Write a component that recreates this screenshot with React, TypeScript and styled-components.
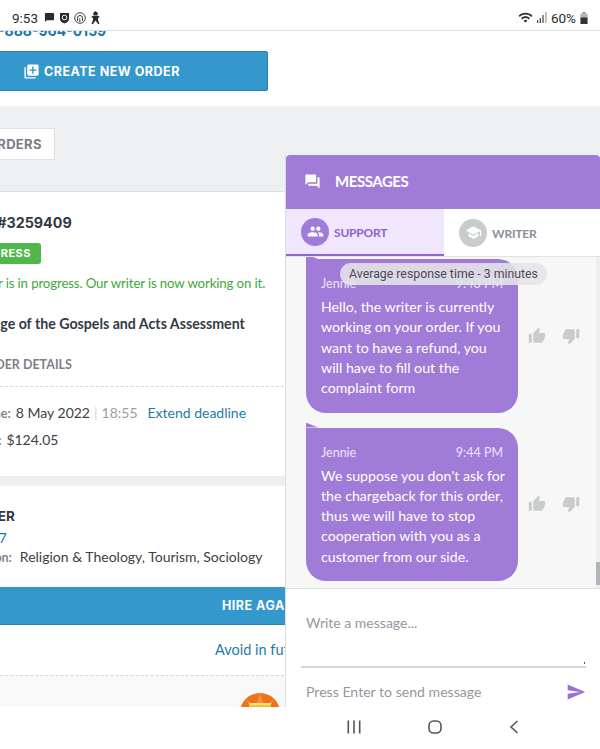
import React from 'react';
import styled, { createGlobalStyle } from 'styled-components';
import { MdChatBubble, MdLibraryAdd, MdPeople, MdQuestionAnswer, MdSchool, MdSend, MdThumbDown, MdThumbUp, MdWifi } from 'react-icons/md';

const GlobalStyle = createGlobalStyle`
    html, body {
        margin: 0;
        padding: 0;
        background: #fff;
        font-family: 'Lato', 'Liberation Sans', sans-serif;
    }
    * { box-sizing: border-box; }
`;

const Page = styled.div`
    width: 600px;
    height: 749px;
    display: flex;
    flex-direction: column;
    overflow: hidden;
    background: #fff;
`;

const StatusBar = styled.header`
    flex: 0 0 31px;
    padding: 5px 12px 0 12px;
    display: flex;
    align-items: center;
    justify-content: space-between;
    background: #fff;
    border-bottom: 1px solid #dfdfdf;
    font-family: 'Roboto', sans-serif;
    font-size: 13.5px;
    color: #2b2b2b;
    position: relative;
    z-index: 2;
`;

const StatusGroup = styled.div`
    display: flex;
    align-items: center;
    gap: 4px;
`;

const StatusTime = styled.span`
    margin-right: 2px;
`;

const Body = styled.div`
    flex: 1;
    position: relative;
    overflow: hidden;
`;

const Main = styled.main`
    width: 100%;
    height: 100%;
    overflow: hidden;
`;

const Inner = styled.div`
    width: 660px;
    margin-left: -60px;
`;

const TopBlock = styled.section`
    background: #fff;
    padding-bottom: 15px;
`;

const Phone = styled.a<{ $indent: number }>`
    display: block;
    margin: -7px 0 13px;
    padding-left: ${p => p.$indent}px;
    font-family: 'Inter', sans-serif;
    font-weight: 700;
    font-size: 14px;
    line-height: 14px;
    color: #1a78a8;
`;

const CreateButton = styled.button`
    width: 328px;
    height: 40px;
    padding: 0 0 0 82px;
    display: flex;
    align-items: center;
    gap: 4px;
    background: #3498cc;
    border: 1px solid #2a82b3;
    border-radius: 2px;
    color: #fff;
    font-family: 'Inter', sans-serif;
    font-weight: 700;
    font-size: 12.5px;
    letter-spacing: 0.5px;
`;

const GrayBlock = styled.section`
    height: 86px;
    padding-top: 22px;
    background: #edeff1;
    border-bottom: 1px solid #dde0e3;
`;

const TabChip = styled.div`
    width: 115px;
    height: 32px;
    padding-left: 46px;
    display: flex;
    align-items: center;
    background: #fff;
    border: 1px solid #dcdfe3;
    font-family: 'Inter', sans-serif;
    font-weight: 700;
    font-size: 13px;
    letter-spacing: 0.3px;
    color: #7a7d87;
`;

const Card = styled.section`
    height: 284px;
    padding-top: 23px;
    background: #fff;
`;

const Row = styled.div<{ $indent?: number; $top?: number }>`
    margin-left: ${p => p.$indent ?? 0}px;
    margin-top: ${p => p.$top ?? 0}px;
`;

const OrderTitle = styled.h2`
    margin: 0;
    font-family: 'Inter', sans-serif;
    font-weight: 700;
    font-size: 14.3px;
    line-height: 16px;
    color: #333a45;
`;

const Badge = styled.span`
    display: inline-block;
    height: 21px;
    padding: 0 10px;
    background: #4fb848;
    border-radius: 3px;
    color: #fff;
    font-family: 'Inter', sans-serif;
    font-weight: 700;
    font-size: 11px;
    letter-spacing: 0.5px;
    line-height: 21px;
    vertical-align: top;
`;

const BadgeRow = styled(Row)`
    height: 21px;
`;

const StatusNote = styled.p`
    margin: 0;
    font-size: 13.3px;
    letter-spacing: -0.15px;
    line-height: 16px;
    color: #3fa83c;
    white-space: nowrap;
`;

const PaperTitle = styled.h3`
    margin: 0;
    font-size: 14.2px;
    font-weight: 700;
    line-height: 16px;
    color: #333a45;
    white-space: nowrap;
`;

const SectionLabel = styled.h4`
    margin: 0;
    font-size: 12.5px;
    font-weight: 700;
    line-height: 16px;
    color: #7c7f88;
`;

const Dashed = styled.hr`
    margin: 0;
    border: 0;
    border-top: 1px dashed #d8d8d8;
`;

const Detail = styled.div`
    font-size: 14px;
    line-height: 18px;
    color: #3c4048;
    white-space: nowrap;
`;

const DetailLabel = styled.span<{ $gap?: number }>`
    font-size: 12.5px;
    font-weight: 700;
    color: #80838b;
    margin-right: ${p => p.$gap ?? 5}px;
`;

const Muted = styled.span`
    color: #9a9da4;
`;

const Divider = styled.span`
    color: #d2d4d8;
    margin: 0 4px;
`;

const Link = styled.a<{ $gap?: number }>`
    color: #1f7aa8;
    margin-left: ${p => p.$gap ?? 0}px;
`;

const Spacer = styled.div`
    height: 10px;
    background: #edeff1;
`;

const WriterBlock = styled.section`
    height: 101px;
    padding-top: 22px;
    background: #fff;
`;

const WriterHead = styled.h3`
    margin: 0;
    font-family: 'Inter', sans-serif;
    font-weight: 700;
    font-size: 13.5px;
    line-height: 16px;
    color: #333a45;
`;

const HireBar = styled.div<{ $indent: number }>`
    height: 38px;
    padding-left: ${p => p.$indent}px;
    display: flex;
    align-items: center;
    background: #3498cc;
    border-bottom: 1px solid #2a82b3;
    color: #fff;
    font-family: 'Inter', sans-serif;
    font-weight: 700;
    font-size: 12.5px;
    letter-spacing: 0.5px;
    white-space: nowrap;
`;

const AvoidRow = styled.div<{ $indent: number }>`
    height: 50px;
    padding: 16px 0 0 ${p => p.$indent}px;
    font-size: 14.5px;
    line-height: 18px;
    color: #1f7aa8;
    white-space: nowrap;
`;

const Reward = styled.div<{ $indent: number }>`
    height: 60px;
    padding: 17px 0 0 ${p => p.$indent}px;
    background: #f8f8f8;
    border-top: 1px dashed #d8d8d8;
`;

const Panel = styled.aside`
    position: absolute;
    top: 124px;
    left: 285px;
    right: 0;
    bottom: 0;
    display: flex;
    flex-direction: column;
    background: #fff;
    border-left: 1px solid #dedede;
`;

const PanelHeader = styled.header`
    flex: 0 0 54px;
    padding: 0 0 2px 18px;
    display: flex;
    align-items: center;
    gap: 14px;
    background: #a07cd8;
    border-radius: 4px 4px 0 0;
    color: #fff;
    font-size: 15px;
    font-weight: 700;
    letter-spacing: -0.45px;
`;

const Tabs = styled.nav`
    flex: 0 0 48px;
    display: flex;
    border-bottom: 1px solid #e2e2e2;
`;

const Tab = styled.div<{ $active?: boolean }>`
    width: ${p => (p.$active ? '158px' : '156px')};
    padding-left: 15px;
    display: flex;
    align-items: center;
    gap: 5px;
    background: ${p => (p.$active ? '#f0e6fd' : '#fff')};
    border-bottom: ${p => (p.$active ? '2px solid #8f66cf' : '0')};
    color: ${p => (p.$active ? '#8a64c8' : '#8a8f99')};
    font-size: 12px;
    font-weight: 700;
    letter-spacing: -0.2px;
`;

const TabLabel = styled.span`
    padding-top: 2px;
`;

const TabAvatar = styled.span<{ $active?: boolean }>`
    width: 28px;
    height: 28px;
    display: flex;
    align-items: center;
    justify-content: center;
    border-radius: 50%;
    background: ${p => (p.$active ? '#a07cd8' : '#c9cccc')};
    color: #fff;
`;

const Messages = styled.div`
    flex: 0 0 332px;
    position: relative;
    padding: 0 0 7px 20px;
    display: flex;
    flex-direction: column;
    justify-content: flex-end;
    gap: 15px;
    overflow: hidden;
    background: #f7f7f7;
    border-bottom: 1px solid #e2e2e2;
`;

const ResponsePill = styled.div`
    position: absolute;
    top: 6px;
    left: 54px;
    width: 207px;
    height: 22px;
    z-index: 1;
    display: flex;
    align-items: center;
    justify-content: center;
    border-radius: 11px;
    background: rgba(229, 229, 233, 0.88);
    font-family: 'Roboto', sans-serif;
    font-size: 12.3px;
    color: #4a4a50;
`;

const ScrollTrack = styled.div`
    position: absolute;
    top: 0;
    right: 0;
    bottom: 0;
    width: 4px;
    display: flex;
    align-items: flex-end;
    padding-bottom: 3px;
    background: #eeeeee;
`;

const ScrollThumb = styled.div`
    width: 4px;
    height: 23px;
    background: #b0b4ba;
`;

const MessageRow = styled.div`
    flex-shrink: 0;
    display: flex;
    align-items: center;
`;

const Bubble = styled.div`
    position: relative;
    width: 212px;
    padding: 16px 12px 14px 15px;
    background: #a07cd8;
    border-radius: 0 20px 20px 20px;
    color: #fff;

    &::before {
        content: '';
        position: absolute;
        top: -5px;
        left: 0;
        width: 12px;
        height: 5px;
        background: #a07cd8;
        clip-path: polygon(0 0, 100% 100%, 0 100%);
    }
`;

const BubbleHead = styled.div`
    display: flex;
    justify-content: space-between;
    padding-right: 3px;
    font-size: 12.5px;
    line-height: 18px;
    margin-bottom: 4px;
    color: #ece4f8;
`;

const BubbleText = styled.p`
    margin: 0;
    font-size: 14.2px;
    line-height: 20.3px;
`;

const Votes = styled.div`
    margin-left: 10px;
    display: flex;
    gap: 16px;
    color: #c9cccc;
`;

const Composer = styled.div`
    flex: 1;
    padding: 24px 14px 0 15px;
`;

const Placeholder = styled.div`
    position: relative;
    padding-left: 5px;
    height: 55px;
    border-bottom: 2px solid #d6d6d6;
    font-size: 14px;
    line-height: 20px;
    color: #94979e;

    &::after {
        content: '';
        position: absolute;
        right: 1px;
        bottom: 2px;
        width: 1px;
        height: 2px;
        background: #555;
    }
`;

const ComposerFoot = styled.div`
    padding: 14px 0 0 5px;
    display: flex;
    align-items: center;
    justify-content: space-between;
    font-size: 14.1px;
    line-height: 20px;
    color: #94979e;
`;

const NavBar = styled.footer`
    flex: 0 0 42px;
    padding: 0 81px 2px 347px;
    display: flex;
    align-items: center;
    justify-content: space-between;
    background: #fff;
    color: #555;
    position: relative;
    z-index: 2;
`;

const ShieldIcon = () => (
    <svg width="11" height="12" viewBox="0 0 11 12">
        <path d="M1 1h9v6c0 2-2 3.500-4.500 4.500C3 10.500 1 9 1 7z" fill="#2b2b2b" />
        <circle cx="5.500" cy="5.500" r="2.300" fill="none" stroke="#fff" strokeWidth="1" />
    </svg>
);

const RingsIcon = () => (
    <svg width="12" height="12" viewBox="0 0 12 12" fill="none" stroke="#2b2b2b" strokeWidth="0.9">
        <circle cx="6" cy="6" r="5.300" />
        <path d="M3.500 9V6a2.500 2.500 0 0 1 5 0v3M5.800 10V6.200" />
    </svg>
);

const PersonIcon = () => (
    <svg width="11" height="13" viewBox="0 0 11 13" fill="#2b2b2b">
        <path d="M5.500 0l3 2.500H7.500V4h-4V2.500h-1z" />
        <path d="M1 6l2.500-1.500h4L10 6 8 7v2l1.500 4H8L5.500 9.500 3 13H1.500L3 9V7z" />
    </svg>
);

const SignalIcon = () => (
    <svg width="10" height="11" viewBox="0 0 10 11" fill="#444">
        <rect x="0" y="8" width="1.200" height="3" />
        <rect x="2.700" y="6" width="1.200" height="5" />
        <rect x="5.400" y="3" width="1.200" height="8" />
        <rect x="8.300" y="0" width="1.200" height="11" fill="#999" />
    </svg>
);

const BatteryIcon = () => (
    <svg width="8" height="12" viewBox="0 0 8 12">
        <rect x="2.500" y="0" width="3" height="1.500" fill="#888" />
        <rect x="0.500" y="1.500" width="7" height="10.500" fill="#b5b5b5" />
        <rect x="0.500" y="5.500" width="7" height="6.500" fill="#333" />
    </svg>
);

const RewardIcon = () => (
    <svg width="40" height="40" viewBox="0 0 40 40">
        <circle cx="20" cy="20" r="20" fill="#f0701e" />
        <path d="M20 0l4 12h-8zM6 6l10 8-4 3zM34 6l-10 8 4 3z" fill="#f59042" />
        <rect x="9" y="10" width="22" height="20" fill="#f4c22b" />
        <rect x="9" y="10" width="22" height="2" fill="#fbe27c" />
    </svg>
);

const RecentsIcon = () => (
    <svg width="14" height="14" viewBox="0 0 14 14" fill="#555">
        <rect x="0.500" y="0.500" width="1.600" height="13" />
        <rect x="6.200" y="0.500" width="1.600" height="13" />
        <rect x="11.900" y="0.500" width="1.600" height="13" />
    </svg>
);

const HomeIcon = () => (
    <svg width="14" height="14" viewBox="0 0 14 14" fill="none" stroke="#555" strokeWidth="1.600">
        <rect x="1" y="1" width="12" height="12" rx="4.500" />
    </svg>
);

const BackIcon = () => (
    <svg width="10" height="14" viewBox="0 0 10 14" fill="none" stroke="#555" strokeWidth="1.600">
        <path d="M8.500 1L2 7l6.500 6" />
    </svg>
);

const messages = [
    {
        time: '9:43 PM',
        text: 'Hello, the writer is currently working on your order. If you want to have a refund, you will have to fill out the complaint form',
    },
    {
        time: '9:44 PM',
        text: "We suppose you don't ask for the chargeback for this order, thus we will have to stop cooperation with you as a customer from our side.",
    },
];

const App: React.FC = () => (
    <Page>
        <GlobalStyle />
        <StatusBar>
            <StatusGroup>
                <StatusTime>9:53</StatusTime>
                <MdChatBubble size={11} color="#2b2b2b" />
                <ShieldIcon />
                <RingsIcon />
                <PersonIcon />
            </StatusGroup>
            <StatusGroup>
                <MdWifi size={15} />
                <SignalIcon />
                <span>60%</span>
                <BatteryIcon />
            </StatusGroup>
        </StatusBar>
        <Body>
            <Main>
                <Inner>
                    <TopBlock>
                        <Phone $indent={52}>1-888-964-0159</Phone>
                        <CreateButton>
                            <MdLibraryAdd size={17} />
                            CREATE NEW ORDER
                        </CreateButton>
                    </TopBlock>
                    <GrayBlock>
                        <TabChip>ORDERS</TabChip>
                    </GrayBlock>
                    <Card>
                        <Row $indent={5}>
                            <OrderTitle>ORDER #3259409</OrderTitle>
                        </Row>
                        <BadgeRow $indent={2} $top={12}>
                            <Badge>IN PROGRESS</Badge>
                        </BadgeRow>
                        <Row $indent={3} $top={11}>
                            <StatusNote>Your order is in progress. Our writer is now working on it.</StatusNote>
                        </Row>
                        <Row $indent={15} $top={25}>
                            <PaperTitle>Language of the Gospels and Acts Assessment</PaperTitle>
                        </Row>
                        <Row $indent={37} $top={25}>
                            <SectionLabel>ORDER DETAILS</SectionLabel>
                        </Row>
                        <Row $top={13}>
                            <Dashed />
                        </Row>
                        <Row $indent={18} $top={17}>
                            <Detail>
                                <DetailLabel>Deadline:</DetailLabel>
                                8 May 2022
                                <Divider>|</Divider>
                                <Muted>18:55</Muted>
                                <Link $gap={10}>Extend deadline</Link>
                            </Detail>
                        </Row>
                        <Row $indent={31} $top={8}>
                            <Detail>
                                <DetailLabel>Total:</DetailLabel>
                                $124.05
                            </Detail>
                        </Row>
                    </Card>
                    <Spacer />
                    <WriterBlock>
                        <Row $indent={22}>
                            <WriterHead>WRITER</WriterHead>
                        </Row>
                        <Row $indent={0} $top={5}>
                            <Detail>
                                <Link>ID 325947</Link>
                            </Detail>
                        </Row>
                        <Row $indent={-8} $top={1}>
                            <Detail>
                                <DetailLabel $gap={8}>Specialization:</DetailLabel>
                                Religion &amp; Theology, Tourism, Sociology
                            </Detail>
                        </Row>
                    </WriterBlock>
                    <HireBar $indent={282}>HIRE AGAIN</HireBar>
                    <AvoidRow $indent={275}>Avoid in future</AvoidRow>
                    <Reward $indent={300}>
                        <RewardIcon />
                    </Reward>
                </Inner>
            </Main>
            <Panel>
                <PanelHeader>
                    <MdQuestionAnswer size={17} />
                    MESSAGES
                </PanelHeader>
                <Tabs>
                    <Tab $active>
                        <TabAvatar $active>
                            <MdPeople size={17} />
                        </TabAvatar>
                        <TabLabel>SUPPORT</TabLabel>
                    </Tab>
                    <Tab>
                        <TabAvatar>
                            <MdSchool size={17} />
                        </TabAvatar>
                        <TabLabel>WRITER</TabLabel>
                    </Tab>
                </Tabs>
                <Messages>
                    <ResponsePill>Average response time - 3 minutes</ResponsePill>
                    {messages.map(m => (
                        <MessageRow key={m.time}>
                            <Bubble>
                                <BubbleHead>
                                    <span>Jennie</span>
                                    <span>{m.time}</span>
                                </BubbleHead>
                                <BubbleText>{m.text}</BubbleText>
                            </Bubble>
                            <Votes>
                                <MdThumbUp size={18} />
                                <MdThumbDown size={18} />
                            </Votes>
                        </MessageRow>
                    ))}
                    <ScrollTrack>
                        <ScrollThumb />
                    </ScrollTrack>
                </Messages>
                <Composer>
                    <Placeholder>Write a message...</Placeholder>
                    <ComposerFoot>
                        Press Enter to send message
                        <MdSend size={20} color="#9a72d6" />
                    </ComposerFoot>
                </Composer>
            </Panel>
        </Body>
        <NavBar>
            <RecentsIcon />
            <HomeIcon />
            <BackIcon />
        </NavBar>
    </Page>
);

export default App;
